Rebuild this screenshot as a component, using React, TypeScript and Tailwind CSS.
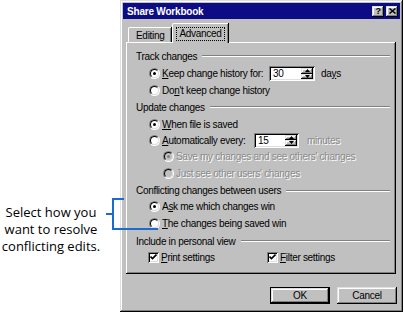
import React from "react";

const raised =
  "shadow-[inset_-1px_-1px_#000,inset_1px_1px_#dfdfdf,inset_-2px_-2px_#808080,inset_2px_2px_#fff]";
const sunken =
  "shadow-[inset_1px_1px_#808080,inset_-1px_-1px_#fff,inset_2px_2px_#000,inset_-2px_-2px_#dfdfdf]";

function Radio({ checked, disabled }: { checked?: boolean; disabled?: boolean }) {
  return (
    <div className="w-[11px] h-[11px] rounded-full border border-t-[#808080] border-l-[#808080] border-b-white border-r-white shrink-0">
      <div
        className={
          "w-full h-full rounded-full border border-t-black border-l-black border-b-[#dfdfdf] border-r-[#dfdfdf] flex items-center justify-center " +
          (disabled ? "bg-[#c0c0c0]" : "bg-white")
        }
      >
        {checked && (
          <div className={"w-[3px] h-[3px] rounded-full " + (disabled ? "bg-[#808080]" : "bg-black")} />
        )}
      </div>
    </div>
  );
}

function Check() {
  return (
    <div className={"w-[11px] h-[11px] bg-white shrink-0 flex items-center justify-center " + sunken}>
      <svg width="7" height="7" viewBox="0 0 7 7">
        <path d="M0.5 2.5 L2.5 4.5 L6.5 0.5" stroke="#000" strokeWidth="1.6" fill="none" />
      </svg>
    </div>
  );
}

function GroupHeader({ label, h }: { label: string; h: string }) {
  return (
    <div className={"flex items-center gap-[5px] " + h}>
      <span className="whitespace-nowrap">{label}</span>
      <div className="flex-1 h-[2px] border-t border-t-[#808080] border-b border-b-white" />
    </div>
  );
}

function Spin({ value, w }: { value: string; w: string }) {
  return (
    <div className={"h-[15px] bg-white flex p-[2px] " + w + " " + sunken}>
      <div className="flex-1 pl-[2px] leading-[11px]">{value}</div>
      <div className="w-[12px] flex flex-col">
        {[0, 1].map((i) => (
          <div key={i} className={"flex-1 bg-[#c0c0c0] flex items-center justify-center " + raised}>
            <svg width="5" height="3" viewBox="0 0 5 3">
              <path d={i === 0 ? "M2.5 0 L5 3 L0 3 Z" : "M0 0 L5 0 L2.5 3 Z"} fill="#000" />
            </svg>
          </div>
        ))}
      </div>
    </div>
  );
}

const dis = "text-[#8a8a8a] [text-shadow:1px_1px_0_#fff]";

export default function App() {
  return (
    <div
      className="relative w-[404px] h-[313px] bg-white flex overflow-hidden"
      style={{ fontFamily: '"Liberation Sans", Arial, sans-serif' }}
    >
      {/* annotation */}
      <div className="w-[120px] shrink-0 pt-[204px]">
        <div
          className="w-[102px] text-center text-[13px] leading-[17px] text-black"
          style={{ fontFamily: '"Open Sans", "Noto Sans", sans-serif' }}
        >
          <div>Select how you</div>
          <div>want to resolve</div>
          <div>conflicting edits.</div>
        </div>
      </div>

      {/* dialog */}
      <div className={"w-[283px] h-[312px] bg-[#c0c0c0] p-[3px] flex flex-col text-[10px] tracking-[-0.3px] text-black " + raised}>
        {/* title bar */}
        <div className="h-[16px] bg-[#0c0c84] flex items-center justify-between pl-[4px] pr-[2px]">
          <span className="text-white font-bold text-[10px] tracking-[-0.2px]">Share Workbook</span>
          <div className="flex gap-[2px]">
            <div className={"w-[12px] h-[11px] bg-[#c0c0c0] flex items-center justify-center font-bold text-[9px] leading-none " + raised}>
              ?
            </div>
            <div className={"w-[12px] h-[11px] bg-[#c0c0c0] flex items-center justify-center " + raised}>
              <svg width="7" height="6" viewBox="0 0 7 6">
                <path d="M0.5 0.5 L6.5 5.5 M6.5 0.5 L0.5 5.5" stroke="#000" strokeWidth="1.5" />
              </svg>
            </div>
          </div>
        </div>

        {/* tabs */}
        <div className="mt-[3px] pl-[3px] pr-[4px] flex flex-col">
          <div className="h-[20px] flex items-end pl-[2px]">
            <div className="h-[15px] px-[7px] flex items-center border-t border-l border-white rounded-tl-[2px] shadow-[inset_-1px_0_#808080,1px_0_#000]">
              Editing
            </div>
            <div className="relative z-10 -mb-[1px] h-[20px] px-[3px] flex items-center bg-[#c0c0c0] border-t border-l border-white rounded-tl-[2px] shadow-[inset_-1px_0_#808080,1px_0_#000] ml-[1px]">
              <span className="border border-dotted border-black px-[2px] leading-[12px]">Advanced</span>
            </div>
          </div>

          {/* panel */}
          <div className="h-[232px] pt-[5px] pl-[10px] pr-[6px] flex flex-col shadow-[inset_-1px_-1px_#000,inset_1px_1px_#fff,inset_-2px_-2px_#808080]">
            <GroupHeader label="Track changes" h="h-[18px]" />
            <div className="h-[17px] flex items-center pl-[13px] gap-[2px]">
              <Radio checked />
              <span className="w-[105px]">
                <u>K</u>eep change history for:
              </span>
              <Spin value="30" w="w-[46px]" />
              <span className="ml-[4px]">
                da<u>y</u>s
              </span>
            </div>
            <div className="h-[16px] flex items-center pl-[13px] gap-[2px]">
              <Radio />
              <span>
                Do<u>n</u>'t keep change history
              </span>
            </div>

            <GroupHeader label="Update changes" h="h-[18px]" />
            <div className="h-[16px] flex items-center pl-[13px] gap-[2px]">
              <Radio checked />
              <span>
                <u>W</u>hen file is saved
              </span>
            </div>
            <div className="h-[16px] flex items-center pl-[13px] gap-[2px]">
              <Radio />
              <span className="w-[90px]">
                <u>A</u>utomatically every:
              </span>
              <Spin value="15" w="w-[45px]" />
              <span className={"ml-[6px] " + dis}>minutes</span>
            </div>
            <div className="h-[16px] flex items-center pl-[27px] gap-[2px]">
              <Radio checked disabled />
              <span className={dis}>Save my changes and see others' changes</span>
            </div>
            <div className="h-[18px] flex items-center pl-[27px] gap-[2px]">
              <Radio disabled />
              <span className={dis}>Just see other users' changes</span>
            </div>

            <GroupHeader label="Conflicting changes between users" h="h-[17px]" />
            <div className="h-[15px] flex items-center pl-[13px] gap-[2px]">
              <Radio checked />
              <span>
                A<u>s</u>k me which changes win
              </span>
            </div>
            <div className="h-[18px] flex items-center pl-[13px] gap-[2px]">
              <Radio />
              <span>
                <u>T</u>he changes being saved win
              </span>
            </div>

            <GroupHeader label="Include in personal view" h="h-[18px]" />
            <div className="h-[15px] flex items-center pl-[12px]">
              <div className="w-[119px] flex items-center gap-[2px]">
                <Check />
                <span>
                  <u>P</u>rint settings
                </span>
              </div>
              <div className="flex items-center gap-[2px]">
                <Check />
                <span>
                  <u>F</u>ilter settings
                </span>
              </div>
            </div>
          </div>
        </div>

        {/* buttons */}
        <div className="mt-[13px] pr-[3px] flex justify-end gap-[7px]">
          <div className="w-[60px] h-[17px] border border-black">
            <div className={"w-full h-full flex items-center justify-center " + raised}>OK</div>
          </div>
          <div className={"w-[60px] h-[17px] flex items-center justify-center " + raised}>Cancel</div>
        </div>
      </div>

      {/* bracket callout */}
      <div className="absolute left-[112px] top-[198px] w-[2px] h-[32px] bg-[#1b6bd0]" />
      <div className="absolute left-[112px] top-[198px] w-[12px] h-[2px] bg-[#1b6bd0]" />
      <div className="absolute left-[112px] top-[228px] w-[46px] h-[2px] bg-[#1b6bd0]" />
      <div className="absolute left-[106px] top-[213px] w-[7px] h-[2px] bg-[#1b6bd0]" />
    </div>
  );
}
